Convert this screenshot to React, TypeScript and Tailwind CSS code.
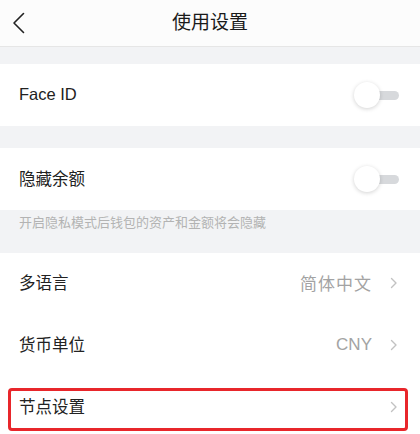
import React, { useState } from 'react';

const font = { fontFamily: '"Noto Sans CJK SC", "Noto Sans", sans-serif' };

const Toggle = ({ on, onChange }: { on: boolean; onChange: () => void }) => (
  <button onClick={onChange} className="relative w-[46px] h-[26px] flex items-center">
    <span className={`absolute left-[6px] right-[1px] h-[9px] rounded-full ${on ? 'bg-[#3b7cff]' : 'bg-[#d7d9dc]'}`} />
    <span
      className={`absolute top-0 w-[26px] h-[26px] rounded-full bg-white shadow-[0_1px_4px_rgba(0,0,0,0.18)] ${
        on ? 'left-[20px]' : 'left-0'
      }`}
    />
  </button>
);

const Chevron = () => (
  <svg width="8" height="12" viewBox="0 0 8 12" fill="none" className="ml-[18px]">
    <path d="M1.5 1.5 6 6l-4.5 4.5" stroke="#c2c2c2" strokeWidth="1.4" strokeLinecap="round" strokeLinejoin="round" />
  </svg>
);

const LinkRow = ({ label, value }: { label: string; value?: string }) => (
  <div className="h-[62px] flex items-center justify-between pl-[19px] pr-[22px] pb-[3px] bg-white">
    <span className="text-[16.5px] text-[#222]">{label}</span>
    <div className="flex items-center">
      {value && <span className="text-[17px] tracking-[1px] text-[#a3a3a3]">{value}</span>}
      <Chevron />
    </div>
  </div>
);

export default function App() {
  const [faceId, setFaceId] = useState(false);
  const [hideBalance, setHideBalance] = useState(false);

  return (
    <div className="w-[420px] h-[434px] overflow-hidden bg-[#f2f3f5]" style={font}>
      {/* header */}
      <div className="relative h-[47px] flex items-center justify-center bg-[#fcfcfc] border-b border-[#e6e6e6]">
        <button className="absolute left-[12px] top-[12px]">
          <svg width="14" height="22" viewBox="0 0 14 22" fill="none">
            <path d="M11.5 1.5 2 11l9.5 9.5" stroke="#222" strokeWidth="1.6" strokeLinecap="round" strokeLinejoin="round" />
          </svg>
        </button>
        <h1 className="text-[19px] text-[#1a1a1a] mb-[4px]">使用设置</h1>
      </div>

      <div className="h-[17px]" />

      <div className="h-[62px] flex items-center justify-between pl-[19px] pr-[20px] bg-white">
        <span
          className="text-[16.5px] text-[#222] mb-[2px]"
          style={{ fontFamily: '"Liberation Sans", "Noto Sans CJK SC", sans-serif' }}
        >
          Face ID
        </span>
        <Toggle on={faceId} onChange={() => setFaceId(!faceId)} />
      </div>

      <div className="h-[22px]" />

      <div className="h-[62px] flex items-center justify-between pl-[19px] pr-[20px] bg-white">
        <span className="text-[16.5px] text-[#222] mb-[2px]">隐藏余额</span>
        <Toggle on={hideBalance} onChange={() => setHideBalance(!hideBalance)} />
      </div>

      <div className="h-[43px] pl-[19px] pt-[2px] text-[13px] text-[#b3b3b3]">开启隐私模式后钱包的资产和金额将会隐藏</div>

      <LinkRow label="多语言" value="简体中文" />
      <div className="h-[62px] flex items-center justify-between pl-[19px] pr-[22px] pb-[3px] bg-white">
        <span className="text-[16.5px] text-[#222]">货币单位</span>
        <div className="flex items-center">
          <span className="text-[17px] text-[#a3a3a3]" style={{ fontFamily: '"Liberation Sans", sans-serif' }}>
            CNY
          </span>
          <Chevron />
        </div>
      </div>

      {/* node settings, highlighted */}
      <div className="relative">
        <LinkRow label="节点设置" />
        <div className="absolute left-[8px] top-[11px] w-[400px] h-[43px] rounded-[4px] border-[3px] border-[#e8262b] pointer-events-none" />
      </div>
    </div>
  );
}
